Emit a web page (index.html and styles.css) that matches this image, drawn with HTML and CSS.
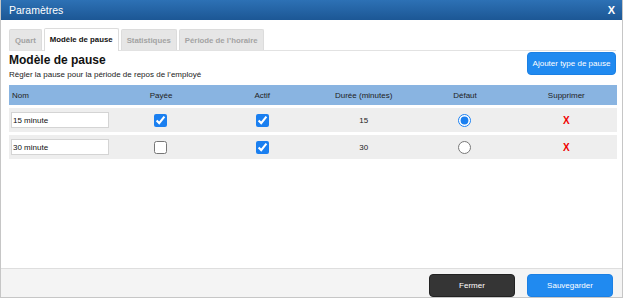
FILE: index.html
```html
<!DOCTYPE html>
<html lang="fr">
  <head>
    <meta charset="UTF-8">
    <title>Paramètres</title>
    <link rel="stylesheet" href="styles.css">
  </head>
  <body>
    <div class="dialog">
      <div class="dialog-title">
        <span>Paramètres</span>
        <span class="close-button">X</span>
      </div>
      <div class="dialog-body">
        <ul class="tabs">
          <li class="tab">Quart</li>
          <li class="tab active">Modèle de pause</li>
          <li class="tab">Statistiques</li>
          <li class="tab">Période de l’horaire</li>
        </ul>
        <div class="section-head">
          <div>
            <h2>Modèle de pause</h2>
            <p>Règler la pause pour la période de repos de l’employé</p>
          </div>
          <button class="btn btn-primary btn-add">Ajouter type de pause</button>
        </div>
        <table class="grid">
          <thead>
            <tr>
              <th class="left">Nom</th>
              <th>Payée</th>
              <th>Actif</th>
              <th>Durée (minutes)</th>
              <th>Défaut</th>
              <th>Supprimer</th>
            </tr>
          </thead>
          <tbody>
            <tr>
              <td class="left"><input type="text" class="form-control" value="15 minute"></td>
              <td><input type="checkbox" checked></td>
              <td><input type="checkbox" checked></td>
              <td>15</td>
              <td><input type="radio" name="default" checked></td>
              <td><span class="delete">X</span></td>
            </tr>
            <tr>
              <td class="left"><input type="text" class="form-control" value="30 minute"></td>
              <td><input type="checkbox"></td>
              <td><input type="checkbox" checked></td>
              <td>30</td>
              <td><input type="radio" name="default"></td>
              <td><span class="delete">X</span></td>
            </tr>
          </tbody>
        </table>
      </div>
      <div class="dialog-footer">
        <button class="btn btn-dark">Fermer</button>
        <button class="btn btn-primary">Sauvegarder</button>
      </div>
    </div>
  </body>
</html>
```

FILE: styles.css
```css
body {
  font-family: 'Liberation Sans', Arial, sans-serif;
  margin: 0;
  padding: 0;
  background-color: #ffffff;
}

.dialog {
  width: 621px;
  height: 297px;
  border: 1px solid #c6c6c6;
  border-top: none;
  display: flex;
  flex-direction: column;
  background: #ffffff;
}

.dialog-title {
  height: 20px;
  padding: 0 7px 0 8px;
  display: flex;
  align-items: center;
  justify-content: space-between;
  background: linear-gradient(#2d71b5, #1c5795);
  color: #ffffff;
  font-size: 10.5px;
}

.close-button {
  font-weight: bold;
  font-size: 11px;
}

.dialog-body {
  flex: 1;
  padding: 8px 6px 0 8px;
}

.tabs {
  list-style: none;
  margin: 0;
  padding: 0;
  display: flex;
  align-items: flex-end;
  gap: 2px;
  border-bottom: 1px solid #e2e2e2;
}

.tab {
  height: 21px;
  line-height: 22px;
  padding: 0 5px;
  font-size: 7.8px;
  font-weight: bold;
  color: #a3a3a3;
  background-color: #e6e6e6;
  border: 1px solid #dcdcdc;
  border-bottom: none;
  border-radius: 2px 2px 0 0;
  box-sizing: border-box;
}

.tab.active {
  height: 23px;
  margin-bottom: -1px;
  line-height: 22px;
  color: #111111;
  background-color: #ffffff;
}

.section-head {
  display: flex;
  justify-content: space-between;
  align-items: flex-start;
  margin-top: 1px;
}

h2 {
  margin: 0;
  font-size: 12px;
  line-height: 16px;
  color: #111111;
}

.section-head p {
  margin: 2px 0 0;
  font-size: 8px;
  line-height: 10px;
  color: #222222;
}

.btn {
  height: 23px;
  border-radius: 4px;
  font-family: 'Liberation Sans', Arial, sans-serif;
  font-size: 8px;
  cursor: pointer;
}

.btn-primary {
  color: #ffffff;
  background-color: #208af0;
  border: 1px solid #1b80e4;
}

.btn-add {
  width: 89px;
  padding: 0;
}

.btn-dark {
  color: #ffffff;
  background-color: #353535;
  border: 1px solid #222222;
}

.grid {
  width: 608px;
  margin-top: 2px;
  border-collapse: separate;
  border-spacing: 0 3px;
  table-layout: fixed;
  font-size: 8px;
  color: #222222;
}

.grid th {
  height: 20px;
  padding: 0;
  font-weight: normal;
  background-color: #89b4e1;
  text-align: center;
}

.grid td {
  height: 24px;
  padding: 0;
  background-color: #eeeeee;
  text-align: center;
}

.grid th.left {
  text-align: left;
  padding-left: 3px;
}

.grid td.left {
  text-align: left;
  padding-left: 2px;
}

.grid input[type="checkbox"],
.grid input[type="radio"] {
  margin: 0;
  vertical-align: middle;
  accent-color: #1a7ff0;
}

.form-control {
  width: 98px;
  height: 16px;
  box-sizing: border-box;
  padding: 0 1px;
  border: 1px solid #d4d4d4;
  font-family: 'Liberation Sans', Arial, sans-serif;
  font-size: 8px;
  color: #111111;
  vertical-align: middle;
}

.delete {
  color: #f00000;
  font-weight: bold;
  font-size: 10px;
}

.dialog-footer {
  height: 29px;
  border-top: 1px solid #dedede;
  background-color: #f4f4f4;
  display: flex;
  justify-content: flex-end;
  align-items: flex-start;
  gap: 12px;
  padding: 5px 9px 0 0;
  box-sizing: border-box;
}

.dialog-footer .btn {
  width: 86px;
}
```
